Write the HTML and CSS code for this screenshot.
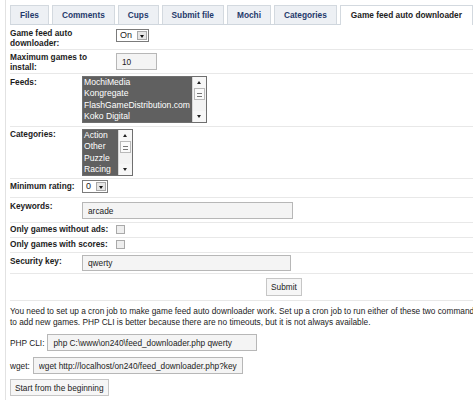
FILE: index.html
```html
<!DOCTYPE html>
<html lang="en">
<head>
    <meta charset="UTF-8">
    <title>Game feed auto downloader</title>
    <link rel="stylesheet" href="styles.css">
</head>
<body>
<div class="page">

    <!-- Tabs -->
    <ul class="tabs">
        <li class="tab">Files</li>
        <li class="tab">Comments</li>
        <li class="tab">Cups</li>
        <li class="tab">Submit file</li>
        <li class="tab">Mochi</li>
        <li class="tab">Categories</li>
        <li class="tab active">Game feed auto downloader</li>
    </ul>

    <!-- Settings form -->
    <form class="settings">
        <div class="row wide r-auto">
            <div class="lbl">Game feed auto downloader:</div>
            <div class="select sel-on"><span class="val">On</span><span class="arrow"></span></div>
        </div>
        <div class="row wide r-max">
            <div class="lbl">Maximum games to install:</div>
            <input class="text text-short" type="text" value="10">
        </div>
        <div class="row r-feeds">
            <div class="lbl">Feeds:</div>
            <div class="listbox feeds">
                <ul class="items">
                    <li>MochiMedia</li>
                    <li>Kongregate</li>
                    <li>FlashGameDistribution.com</li>
                    <li>Koko Digital</li>
                </ul>
                <div class="scrollbar"><span class="up"></span><span class="thumb"></span><span class="down"></span></div>
            </div>
        </div>
        <div class="row r-cats">
            <div class="lbl">Categories:</div>
            <div class="listbox cats">
                <ul class="items">
                    <li>Action</li>
                    <li>Other</li>
                    <li>Puzzle</li>
                    <li>Racing</li>
                </ul>
                <div class="scrollbar"><span class="up"></span><span class="thumb"></span><span class="down"></span></div>
            </div>
        </div>
        <div class="row r-rating">
            <div class="lbl">Minimum rating:</div>
            <div class="select"><span class="val">0</span><span class="arrow"></span></div>
        </div>
        <div class="row r-keywords">
            <div class="lbl">Keywords:</div>
            <input class="text text-long" type="text" value="arcade">
        </div>
        <div class="row wide r-check">
            <div class="lbl">Only games without ads:</div>
            <span class="check"></span>
        </div>
        <div class="row wide r-check">
            <div class="lbl">Only games with scores:</div>
            <span class="check"></span>
        </div>
        <div class="row r-key">
            <div class="lbl">Security key:</div>
            <input class="text text-key" type="text" value="qwerty">
        </div>
        <div class="row r-submit">
            <button type="button" class="btn submit">Submit</button>
        </div>
    </form>

    <p class="note">You need to set up a cron job to make game feed auto downloader work. Set up a cron job to run either of these two commands<br>to add new games. PHP CLI is better because there are no timeouts, but it is not always available.</p>

    <div class="cmd">
        <span>PHP CLI:</span>
        <input class="text text-cmd" type="text" value="php C:\www\on240\feed_downloader.php qwerty">
    </div>
    <div class="cmd">
        <span>wget:</span>
        <input class="text text-cmd" type="text" value="wget http://localhost/on240/feed_downloader.php?key=qwerty">
    </div>

    <button type="button" class="btn restart">Start from the beginning</button>
</div>
</body>
</html>
```

FILE: styles.css
```css
body {
    margin: 0;
    font-family: "Liberation Sans", Arial, sans-serif;
    font-size: 8.3px;
    color: #1c1c1c;
    background: #fff;
    overflow: hidden;
}
.page {
    margin-left: 5px;
    border-left: 1px solid #e2e2e2;
    padding-left: 4px;
    min-height: 400px;
}

/* Tabs */
.tabs {
    display: flex;
    align-items: flex-start;
    gap: 3px;
    list-style: none;
    margin: 0;
    padding: 5px 0 0;
    height: 19px;
    border-bottom: 1px solid #cfd6dd;
}
.tab {
    height: 18px;
    line-height: 18px;
    padding: 0 9px;
    border: 1px solid #d3d9df;
    border-bottom: none;
    background: #edf0f4;
    font-weight: bold;
    color: #1f3a6b;
    white-space: nowrap;
}
.tab.active {
    height: 19px;
    padding: 0 10px;
    background: #fff;
    color: #222;
}

/* Form rows */
.row {
    display: flex;
    align-items: flex-start;
    box-sizing: border-box;
    padding-top: 2px;
    border-bottom: 1px solid #e8e8e8;
}
.lbl {
    flex: none;
    width: 72px;
    padding-top: 1px;
    font-weight: bold;
    line-height: 10px;
}
.row.wide .lbl {
    width: 106px;
    padding-right: 7px;
    box-sizing: border-box;
}
.r-auto { height: 25px; padding-top: 3px; }
.r-auto .lbl { padding-top: 0; }
.r-auto .select { margin-top: 1px; }
.r-max { height: 24px; }
.r-max .lbl { padding-top: 0; }
.r-feeds { height: 53px; }
.r-cats { height: 52px; }
.r-cats .lbl { padding-top: 0; }
.r-rating { height: 19px; padding-top: 1px; }
.r-keywords { height: 25px; }
.r-keywords .text { margin-top: 2px; }
.r-check { height: 15px; padding-top: 1px; }
.r-check .lbl { padding-top: 0; white-space: nowrap; }
.r-check .check { margin-top: 1px; }
.r-key { height: 21px; }
.r-submit { height: 27px; padding-top: 4px; }

/* Fake select */
.select {
    display: flex;
    height: 13px;
    box-sizing: border-box;
    border: 1px solid #7b7b7b;
    background: #fff;
}
.select .val {
    padding: 0 5px 0 3px;
    font-size: 9px;
    line-height: 11px;
}
.select .arrow {
    position: relative;
    width: 10px;
    margin: 1px 1px 1px 0;
    background: #e6e6e6;
    border: 1px solid #a8a8a8;
    box-sizing: border-box;
}
.select .arrow::after {
    content: "";
    position: absolute;
    left: 2px;
    top: 3px;
    border-left: 2px solid transparent;
    border-right: 2px solid transparent;
    border-top: 3px solid #111;
}

/* Text inputs */
.text {
    height: 17px;
    box-sizing: border-box;
    margin: 0;
    padding: 0 5px;
    border: 1px solid #b7b7b7;
    background: #f4f4f4;
    font-family: "Liberation Sans", Arial, sans-serif;
    font-size: 8.3px;
    color: #222;
    outline: none;
}
.text-short { width: 41px; margin-top: 1px; }
.text-long { width: 211px; }
.text-key { width: 209px; height: 16px; }
.text-cmd { width: 210px; }

/* Listboxes */
.listbox {
    display: flex;
    height: 47px;
    box-sizing: border-box;
    border: 1px solid #6f6f6f;
    background: #fff;
    overflow: hidden;
}
.feeds { width: 125px; }
.cats { width: 51px; }
.items {
    flex: 1;
    margin: 0;
    padding: 0;
    list-style: none;
    background: #606060;
    overflow: hidden;
}
.items li {
    padding: 0 1px;
    font-size: 8.6px;
    line-height: 11.3px;
    color: #fff;
    white-space: nowrap;
}
.scrollbar {
    flex: none;
    width: 13px;
    display: flex;
    flex-direction: column;
    background: #f3f3f3;
    border-left: 1px solid #d6d6d6;
}
.scrollbar span {
    position: relative;
    display: block;
    height: 11px;
    box-sizing: border-box;
}
.scrollbar .up,
.scrollbar .down {
    background: #f7f7f7;
}
.scrollbar .down { margin-top: auto; }
.scrollbar .up::after,
.scrollbar .down::after {
    content: "";
    position: absolute;
    left: 4px;
    top: 4px;
    border-left: 2px solid transparent;
    border-right: 2px solid transparent;
}
.scrollbar .up::after { border-bottom: 3px solid #222; }
.scrollbar .down::after { border-top: 3px solid #222; }
.scrollbar .thumb {
    height: 12px;
    margin: 0 1px;
    border: 1px solid #b9b9b9;
    background: #fafafa repeating-linear-gradient(#fafafa 0 2px, #777 2px 3px) center / 5px 7px no-repeat;
}

/* Checkbox */
.check {
    width: 9px;
    height: 9px;
    box-sizing: border-box;
    border: 1px solid #a9a9a9;
    background: #eeeeee;
}

/* Buttons */
.btn {
    height: 18px;
    padding: 0 4px;
    border: 1px solid #c6c6c6;
    background: #f6f6f6;
    font-family: "Liberation Sans", Arial, sans-serif;
    font-size: 8.3px;
    color: #222;
}
.submit { margin-left: 256px; }

/* Cron commands */
.note {
    margin: 5px 0 0;
    line-height: 11px;
    white-space: nowrap;
}
.cmd {
    display: flex;
    align-items: center;
    gap: 3px;
    margin-top: 6px;
}
.restart { margin-top: 5px; height: 17px; }
```
